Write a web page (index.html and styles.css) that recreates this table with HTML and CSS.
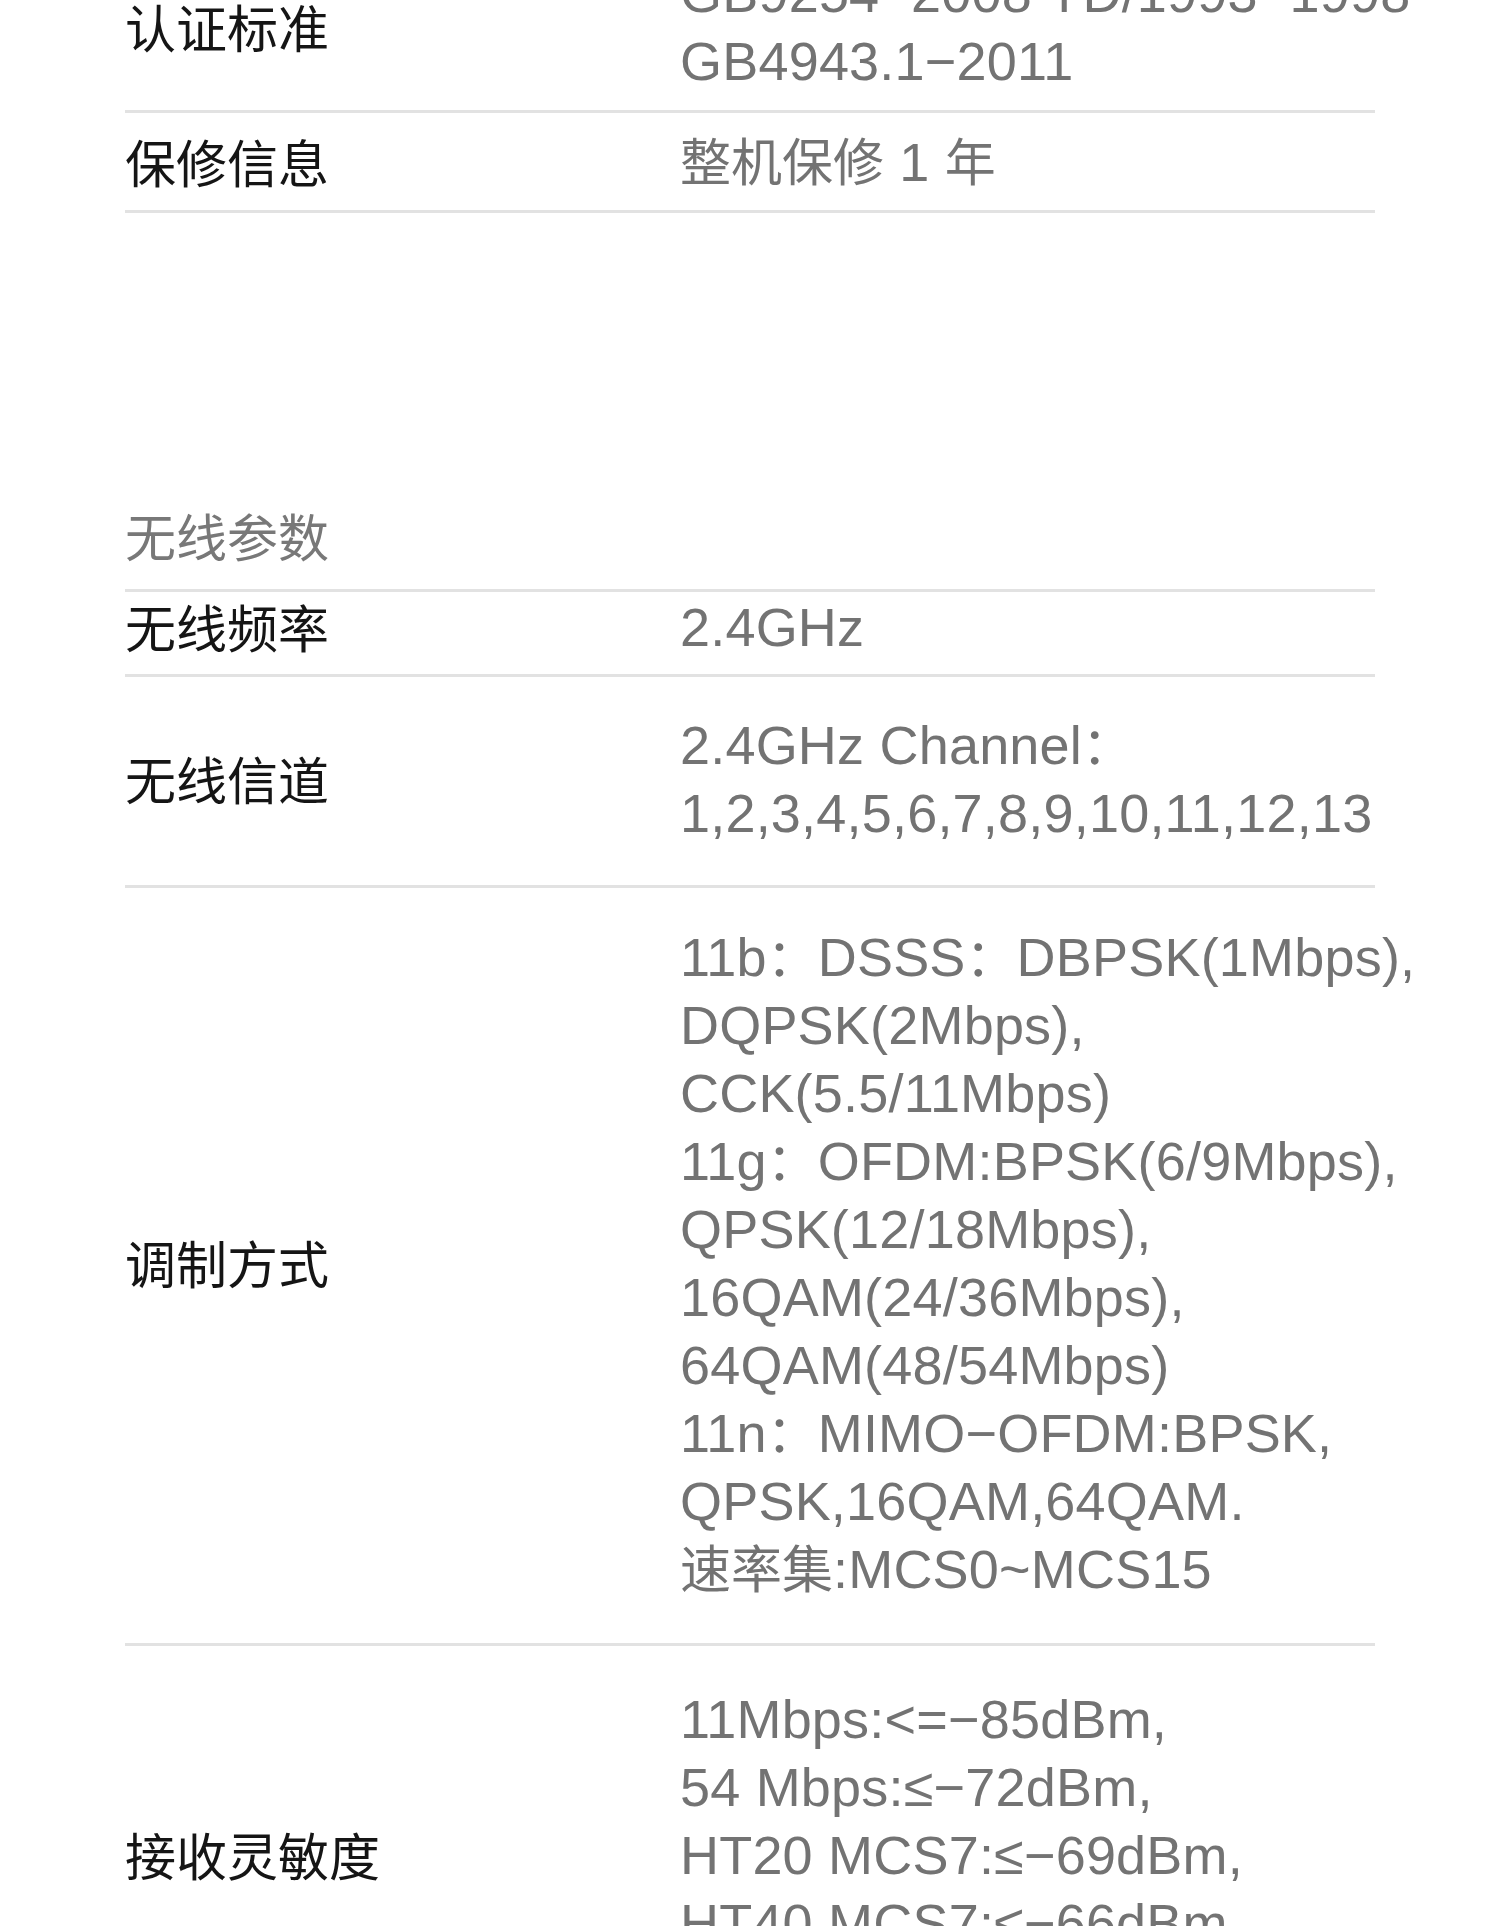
FILE: index.html
```html
<!DOCTYPE html>
<html lang="zh-CN">
<head>
<meta charset="utf-8">
<title>无线参数</title>
<link rel="stylesheet" href="styles.css">
</head>
<body>
<div class="sheet">
  <div class="row r-a">
    <div class="label">认证标准</div>
    <div class="value">GB9254−2008 YD/1993−1998<br>GB4943.1−2011</div>
  </div>
  <div class="row r-b">
    <div class="label">保修信息</div>
    <div class="value"><span class="zh">整机保修</span> 1 <span class="zh">年</span></div>
  </div>

  <div class="section-title">无线参数</div>

  <div class="row r-c">
    <div class="label">无线频率</div>
    <div class="value">2.4GHz</div>
  </div>
  <div class="row r-d">
    <div class="label">无线信道</div>
    <div class="value">2.4GHz Channel<span class="zh">：</span><br>1,2,3,4,5,6,7,8,9,10,11,12,13</div>
  </div>
  <div class="row r-e">
    <div class="label">调制方式</div>
    <div class="value">11b<span class="zh">：</span>DSSS<span class="zh">：</span>DBPSK(1Mbps),<br>DQPSK(2Mbps),<br>CCK(5.5/11Mbps)<br>11g<span class="zh">：</span>OFDM:BPSK(6/9Mbps),<br>QPSK(12/18Mbps),<br>16QAM(24/36Mbps),<br>64QAM(48/54Mbps)<br>11n<span class="zh">：</span>MIMO−OFDM:BPSK,<br>QPSK,16QAM,64QAM.<br><span class="zh">速率集</span>:MCS0~MCS15</div>
  </div>
  <div class="row r-f">
    <div class="label">接收灵敏度</div>
    <div class="value">11Mbps:&lt;=−85dBm,<br>54 Mbps:≤−72dBm,<br>HT20 MCS7:≤−69dBm,<br>HT40 MCS7:≤−66dBm,<br>HT40 MCS15:≤−64dBm</div>
  </div>
</div>
</body>
</html>
```

FILE: styles.css
```css
html, body {
  margin: 0;
  padding: 0;
  background: #ffffff;
}

body {
  width: 1500px;
  height: 1926px;
  overflow: hidden;
}

.sheet {
  margin-top: -57px;
  margin-left: 125px;
  width: 1250px;
}

.row {
  display: grid;
  grid-template-columns: 555px 1fr;
  align-items: center;
  border-bottom: 3px solid #e2e2e2;
}

.label {
  font-family: "Noto Sans CJK SC", "Liberation Sans", sans-serif;
  font-size: 51px;
  line-height: 64px;
  padding-bottom: 2px;
  color: #151515;
  white-space: nowrap;
}

.value {
  font-family: "Liberation Sans", "Noto Sans CJK SC", sans-serif;
  font-size: 54px;
  letter-spacing: 0.2px;
  line-height: 68px;
  color: #737373;
  white-space: nowrap;
}

.zh {
  font-family: "Noto Sans CJK SC", sans-serif;
  font-size: 51px;
  letter-spacing: 0;
  line-height: 1;
}

.section-title {
  margin-top: 288px;
  padding-bottom: 20px;
  border-bottom: 3px solid #e2e2e2;
  font-family: "Noto Sans CJK SC", "Liberation Sans", sans-serif;
  font-size: 51px;
  line-height: 68px;
  color: #787878;
}

.r-a { padding: 16px 0 15px; }
.r-b { padding: 15px 0 14px; }
.r-c { padding: 1px 0 13px; }
.r-d { padding: 34px 0 38px; }
.r-e { padding: 35px 0 40px; }
.r-f { padding: 39px 0 40px; }
```
